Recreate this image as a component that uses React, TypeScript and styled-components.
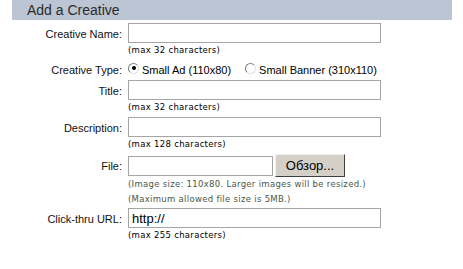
import React, { useState } from "react";
import styled, { createGlobalStyle } from "styled-components";

const GlobalStyle = createGlobalStyle`
    body {
        margin: 0;
        background: #ffffff;
        font-family: "Liberation Sans", Arial, sans-serif;
    }
`;

const Page = styled.div`
    width: 440px;
    margin-left: 12px;
`;

const Header = styled.div`
    height: 20px;
    background: #bcc5d3;
    color: #2b2b2b;
    font-size: 14px;
    line-height: 20px;
    padding-left: 15px;
`;

const Form = styled.div`
    display: grid;
    grid-template-columns: 110px 1fr;
    column-gap: 6px;
    padding-top: 3px;
`;

const Label = styled.div<{ $top?: number }>`
    text-align: right;
    font-size: 11px;
    color: #111;
    padding-top: ${(p) => p.$top ?? 5}px;
`;

const Field = styled.div`
    display: flex;
    flex-direction: column;
`;

const TextInput = styled.input<{ $width?: number }>`
    box-sizing: border-box;
    width: ${(p) => p.$width ?? 253}px;
    height: 20px;
    border: 1px solid #a5a5a5;
    margin: 0;
    padding: 0 3px;
    font-family: "Liberation Sans", Arial, sans-serif;
    font-size: 13px;
    color: #000;
    outline: none;
`;

const Hint = styled.div<{ $muted?: boolean; $gap?: number }>`
    font-family: "DejaVu Sans", Verdana, sans-serif;
    font-size: 8.5px;
    letter-spacing: 0.3px;
    color: ${(p) => (p.$muted ? "#4b5748" : "#000")};
    line-height: 15px;
    margin-bottom: ${(p) => p.$gap ?? 2}px;
`;

const RadioRow = styled.div`
    display: flex;
    align-items: center;
    gap: 14px;
    height: 20px;
    font-size: 11px;
`;

const RadioOption = styled.label`
    display: flex;
    align-items: center;
    gap: 3px;
`;

const RadioDot = styled.span<{ $checked?: boolean }>`
    box-sizing: border-box;
    width: 11px;
    height: 11px;
    border-radius: 50%;
    border: 1px solid;
    border-color: #808080 #e0e0e0 #e0e0e0 #808080;
    background: #fff;
    position: relative;
    top: -2px;
    &::after {
        content: "";
        display: ${(p) => (p.$checked ? "block" : "none")};
        position: absolute;
        left: 2.5px;
        top: 2.5px;
        width: 4px;
        height: 4px;
        border-radius: 50%;
        background: #000;
    }
`;

const FileRow = styled.div`
    display: flex;
    align-items: center;
    gap: 2px;
    height: 23px;
`;

const BrowseButton = styled.button`
    height: 23px;
    width: 70px;
    background: #d4d0c8;
    border: 1px solid;
    border-color: #f2f2f2 #404040 #404040 #f2f2f2;
    font-family: "Liberation Sans", Arial, sans-serif;
    font-size: 13px;
    color: #000;
    padding: 0;
`;

export default function App() {
    const [type, setType] = useState("small");

    return (
        <Page>
            <GlobalStyle />
            <Header>Add a Creative</Header>
            <Form>
                <Label>Creative Name:</Label>
                <Field>
                    <TextInput />
                    <Hint>(max 32 characters)</Hint>
                </Field>

                <Label $top={4}>Creative Type:</Label>
                <RadioRow>
                    <RadioOption onClick={() => setType("small")}>
                        <RadioDot $checked={type === "small"} />
                        Small Ad (110x80)
                    </RadioOption>
                    <RadioOption onClick={() => setType("banner")}>
                        <RadioDot $checked={type === "banner"} />
                        Small Banner (310x110)
                    </RadioOption>
                </RadioRow>

                <Label>Title:</Label>
                <Field>
                    <TextInput />
                    <Hint>(max 32 characters)</Hint>
                </Field>

                <Label>Description:</Label>
                <Field>
                    <TextInput />
                    <Hint>(max 128 characters)</Hint>
                </Field>

                <Label $top={6}>File:</Label>
                <Field>
                    <FileRow>
                        <TextInput $width={145} />
                        <BrowseButton>Обзор...</BrowseButton>
                    </FileRow>
                    <Hint $muted $gap={0}>(Image size: 110x80. Larger images will be resized.)</Hint>
                    <Hint $muted $gap={1}>(Maximum allowed file size is 5MB.)</Hint>
                </Field>

                <Label>Click-thru URL:</Label>
                <Field>
                    <TextInput defaultValue="http://" />
                    <Hint>(max 255 characters)</Hint>
                </Field>
            </Form>
        </Page>
    );
}
